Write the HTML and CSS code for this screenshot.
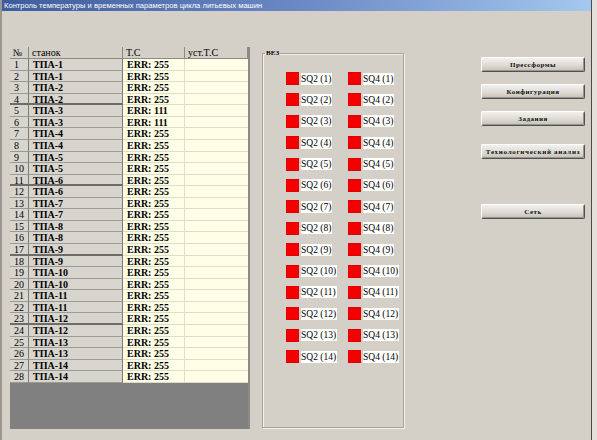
FILE: index.html
```html
<!DOCTYPE html>
<html lang="ru">
<head>
    <meta charset="UTF-8">
    <title>Контроль температуры</title>
    <link rel="stylesheet" href="styles.css">
</head>
<body>
<div class="window">
    <div class="titlebar">Контроль температуры и временных параметров цикла литьевых машин</div>

    <div class="content">
        <!-- таблица станков -->
        <div class="grid-wrap">
            <div class="grid">
                <div class="hd">№</div><div class="hd">станок</div><div class="hd">T.C</div><div class="hd">уст.T.C</div>
                <div class="n">1</div><div class="m">ТПА-1</div><div class="t">ERR: 255</div><div class="s"></div>
                <div class="n">2</div><div class="m">ТПА-1</div><div class="t">ERR: 255</div><div class="s"></div>
                <div class="n">3</div><div class="m">ТПА-2</div><div class="t">ERR: 255</div><div class="s"></div>
                <div class="n sep">4</div><div class="m sep">ТПА-2</div><div class="t">ERR: 255</div><div class="s"></div>
                <div class="n">5</div><div class="m">ТПА-3</div><div class="t">ERR: 111</div><div class="s"></div>
                <div class="n">6</div><div class="m">ТПА-3</div><div class="t">ERR: 111</div><div class="s"></div>
                <div class="n">7</div><div class="m">ТПА-4</div><div class="t">ERR: 255</div><div class="s"></div>
                <div class="n">8</div><div class="m">ТПА-4</div><div class="t">ERR: 255</div><div class="s"></div>
                <div class="n">9</div><div class="m">ТПА-5</div><div class="t">ERR: 255</div><div class="s"></div>
                <div class="n">10</div><div class="m">ТПА-5</div><div class="t">ERR: 255</div><div class="s"></div>
                <div class="n sep">11</div><div class="m sep">ТПА-6</div><div class="t">ERR: 255</div><div class="s"></div>
                <div class="n">12</div><div class="m">ТПА-6</div><div class="t">ERR: 255</div><div class="s"></div>
                <div class="n">13</div><div class="m">ТПА-7</div><div class="t">ERR: 255</div><div class="s"></div>
                <div class="n">14</div><div class="m">ТПА-7</div><div class="t">ERR: 255</div><div class="s"></div>
                <div class="n">15</div><div class="m">ТПА-8</div><div class="t">ERR: 255</div><div class="s"></div>
                <div class="n">16</div><div class="m">ТПА-8</div><div class="t">ERR: 255</div><div class="s"></div>
                <div class="n sep">17</div><div class="m sep">ТПА-9</div><div class="t">ERR: 255</div><div class="s"></div>
                <div class="n">18</div><div class="m">ТПА-9</div><div class="t">ERR: 255</div><div class="s"></div>
                <div class="n">19</div><div class="m">ТПА-10</div><div class="t">ERR: 255</div><div class="s"></div>
                <div class="n">20</div><div class="m">ТПА-10</div><div class="t">ERR: 255</div><div class="s"></div>
                <div class="n">21</div><div class="m">ТПА-11</div><div class="t">ERR: 255</div><div class="s"></div>
                <div class="n">22</div><div class="m">ТПА-11</div><div class="t">ERR: 255</div><div class="s"></div>
                <div class="n sep">23</div><div class="m sep">ТПА-12</div><div class="t">ERR: 255</div><div class="s"></div>
                <div class="n">24</div><div class="m">ТПА-12</div><div class="t">ERR: 255</div><div class="s"></div>
                <div class="n">25</div><div class="m">ТПА-13</div><div class="t">ERR: 255</div><div class="s"></div>
                <div class="n">26</div><div class="m">ТПА-13</div><div class="t">ERR: 255</div><div class="s"></div>
                <div class="n">27</div><div class="m">ТПА-14</div><div class="t">ERR: 255</div><div class="s"></div>
                <div class="n">28</div><div class="m">ТПА-14</div><div class="t">ERR: 255</div><div class="s"></div>
            </div>
            <div class="grid-empty"></div>
        </div>

        <!-- датчики -->
        <fieldset class="group">
            <legend>ВЕЗ</legend>
            <div class="sensors">
                <div class="sq"><span class="led"></span><span class="lbl">SQ2 (1)</span></div><div class="sq"><span class="led"></span><span class="lbl">SQ4 (1)</span></div>
                <div class="sq"><span class="led"></span><span class="lbl">SQ2 (2)</span></div><div class="sq"><span class="led"></span><span class="lbl">SQ4 (2)</span></div>
                <div class="sq"><span class="led"></span><span class="lbl">SQ2 (3)</span></div><div class="sq"><span class="led"></span><span class="lbl">SQ4 (3)</span></div>
                <div class="sq"><span class="led"></span><span class="lbl">SQ2 (4)</span></div><div class="sq"><span class="led"></span><span class="lbl">SQ4 (4)</span></div>
                <div class="sq"><span class="led"></span><span class="lbl">SQ2 (5)</span></div><div class="sq"><span class="led"></span><span class="lbl">SQ4 (5)</span></div>
                <div class="sq"><span class="led"></span><span class="lbl">SQ2 (6)</span></div><div class="sq"><span class="led"></span><span class="lbl">SQ4 (6)</span></div>
                <div class="sq"><span class="led"></span><span class="lbl">SQ2 (7)</span></div><div class="sq"><span class="led"></span><span class="lbl">SQ4 (7)</span></div>
                <div class="sq"><span class="led"></span><span class="lbl">SQ2 (8)</span></div><div class="sq"><span class="led"></span><span class="lbl">SQ4 (8)</span></div>
                <div class="sq"><span class="led"></span><span class="lbl">SQ2 (9)</span></div><div class="sq"><span class="led"></span><span class="lbl">SQ4 (9)</span></div>
                <div class="sq"><span class="led"></span><span class="lbl">SQ2 (10)</span></div><div class="sq"><span class="led"></span><span class="lbl">SQ4 (10)</span></div>
                <div class="sq"><span class="led"></span><span class="lbl">SQ2 (11)</span></div><div class="sq"><span class="led"></span><span class="lbl">SQ4 (11)</span></div>
                <div class="sq"><span class="led"></span><span class="lbl">SQ2 (12)</span></div><div class="sq"><span class="led"></span><span class="lbl">SQ4 (12)</span></div>
                <div class="sq"><span class="led"></span><span class="lbl">SQ2 (13)</span></div><div class="sq"><span class="led"></span><span class="lbl">SQ4 (13)</span></div>
                <div class="sq"><span class="led"></span><span class="lbl">SQ2 (14)</span></div><div class="sq"><span class="led"></span><span class="lbl">SQ4 (14)</span></div>
            </div>
        </fieldset>

        <!-- кнопки -->
        <div class="buttons">
            <button class="btn">Прессформы</button>
            <button class="btn">Конфигурация</button>
            <button class="btn">Задания</button>
            <button class="btn btn-wide">Технологический анализ</button>
            <button class="btn btn-net">Сеть</button>
        </div>
    </div>
</div>
</body>
</html>
```

FILE: styles.css
```css
body {
    margin: 0;
    width: 597px;
    height: 440px;
    overflow: hidden;
    background: #e4e1da;
    font-family: 'Liberation Serif', 'DejaVu Serif', serif;
    color: #000;
}

.window {
    width: 592px;
    height: 440px;
    background: #d4d0c8;
    border-left: 2px solid #9a978f;
    border-right: 1px solid #4a4a4a;
    box-sizing: border-box;
}

.titlebar {
    height: 11px;
    line-height: 11px;
    padding-left: 2px;
    background: linear-gradient(90deg, #3f5c9c, #6a88c4 50%, #a4c8ee);
    color: #fff;
    font-family: 'Liberation Sans', sans-serif;
    font-size: 7.6px;
    white-space: nowrap;
    overflow: hidden;
}

.content {
    display: flex;
    align-items: flex-start;
    padding: 36px 0 0 8px;
}

/* таблица */
.grid-wrap {
    width: 240px;
    border-right: 2px solid #8a8a8a;
    box-sizing: border-box;
}

.grid {
    display: grid;
    grid-template-columns: 19px 94px 62px 63px;
    grid-template-rows: 12px;
    grid-auto-rows: 11.57px;
    font-size: 10px;
    line-height: 11px;
}

.grid > div {
    box-sizing: border-box;
    overflow: hidden;
    white-space: nowrap;
}

.hd {
    background: #d4d0c8;
    border-right: 1px solid #8c8a84;
    border-bottom: 1px solid #8c8a84;
    padding-left: 3px;
}

.n, .m {
    background: #d8d5ce;
    border-bottom: 1px solid #9c9a94;
    border-right: 1px solid #7c7a74;
}

.n {
    padding-left: 4px;
}

.m {
    padding-left: 4px;
    font-weight: bold;
}

.n.sep, .m.sep {
    border-bottom: 2px solid #6e6c68;
}

.t, .s {
    background: #fffee6;
    border-bottom: 1px solid #dedcc6;
}

.t {
    padding-left: 4px;
    font-weight: bold;
    border-right: 1px solid #e0dec8;
}

.grid-empty {
    height: 46px;
    background: #808080;
}

/* группа датчиков */
.group {
    margin: 2px 0 0 12px;
    padding: 0;
    width: 142px;
    height: 379px;
    box-sizing: border-box;
    border: 1px solid #a6a39c;
    box-shadow: inset 1px 1px 0 #f2f0ec, 1px 1px 0 #f2f0ec;
}

.group legend {
    margin-left: 2px;
    padding: 0 1px;
    font-size: 7px;
    line-height: 8px;
    font-weight: bold;
}

.sensors {
    display: grid;
    grid-template-columns: 62px 50px;
    grid-auto-rows: 21.4px;
    padding: 15px 0 0 23px;
}

.sq {
    display: flex;
    align-items: center;
    height: 13px;
}

.led {
    width: 13px;
    height: 13px;
    background: #f40000;
    box-shadow: inset 0 0 0 1px #e00000;
    flex: none;
}

.lbl {
    margin-left: 2px;
    background: #fff;
    font-size: 9.5px;
    line-height: 12px;
    padding-right: 1px;
    white-space: nowrap;
}

/* кнопки */
.buttons {
    display: flex;
    flex-direction: column;
    gap: 12px;
    margin: 10px 0 0 77px;
}

.btn {
    width: 104px;
    height: 15px;
    padding: 0;
    border: 1px solid;
    border-color: #ffffff #505050 #505050 #ffffff;
    border-radius: 2px;
    background: linear-gradient(#f2f1ee, #dcd9d2 60%, #c4c0b8);
    box-shadow: inset -1px -1px 0 #9a968e;
    font-family: 'Liberation Serif', serif;
    font-size: 7px;
    font-weight: bold;
    letter-spacing: 0.5px;
    color: #111;
    cursor: pointer;
}

.btn-wide {
    margin-top: 6px;
    letter-spacing: 0.7px;
}

.btn-net {
    margin-top: 33px;
}
```
